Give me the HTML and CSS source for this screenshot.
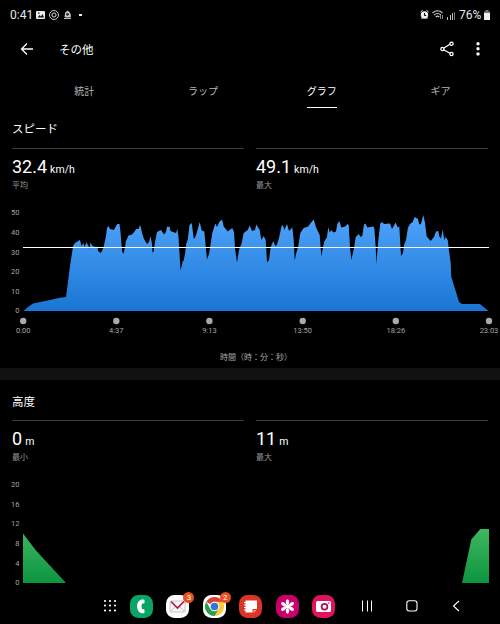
FILE: index.html
```html
<!DOCTYPE html>
<html lang="ja">
<head>
  <meta charset="UTF-8" />
  <meta name="viewport" content="width=device-width, initial-scale=1.0" />
  <title>その他</title>
  <link rel="stylesheet" href="styles.css">
</head>
<body>
  <div class="screen">
    <div class="status">
      <span class="clock">0:41</span>
      <svg class="status-left" width="50" height="12" viewBox="0 0 50 12">
        <rect x="0" y="2" width="9" height="8" rx="1" fill="#eee"/>
        <path d="M1.500 8.500l2-2.500 1.500 1.500L6.500 5l1.500 3.500z" fill="#111"/>
        <rect x="2" y="3.500" width="1.500" height="1.200" fill="#111"/>
        <circle cx="18" cy="6" r="4.500" fill="none" stroke="#ccc"/>
        <circle cx="18" cy="6" r="2.100" fill="none" stroke="#ddd"/>
        <path d="M28 9.500h7M29 8q0-5 2.500-6 3 1 3 6z" fill="#bbb" stroke="#bbb"/>
        <circle cx="31.500" cy="5.300" r="2" fill="#333" stroke="#fff" stroke-width=".8"/>
        <rect x="43" y="5" width="3" height="2" fill="#eee"/>
      </svg>
      <svg class="status-right" width="36" height="12" viewBox="0 0 36 12">
        <circle cx="4.500" cy="6" r="3.700" fill="#eee"/>
        <path d="M.5 3L2.500 1.300M8.500 3L6.500 1.300M1.500 10l1-1M7.500 10l-1-1" stroke="#eee"/>
        <path d="M4.500 4v2.500h1.700" fill="none" stroke="#000"/>
        <path d="M12.500 4q5-4.500 10 0M14 6q3.500-3 7 0M15.700 8q1.800-1.800 3.600 0" fill="none" stroke="#ccc" stroke-width="1.100"/>
        <path d="M20.500 6v4M22.500 6v4" stroke="#888"/>
        <path d="M27.500 8v3M30.500 6v5M32.500 4v7" stroke="#bbb"/>
        <path d="M34.500 3v8" stroke="#777"/>
      </svg>
      <span class="percent">76%</span>
      <svg class="battery" width="6" height="10" viewBox="0 0 6 10">
        <path d="M1.500 0h3v1.500H6V4H0V1.500h1.500z" fill="#777"/>
        <rect y="3" width="6" height="7" fill="#eee"/>
      </svg>
    </div>

    <header class="app-bar">
      <svg width="14" height="14" viewBox="0 0 14 14" fill="none" stroke="#fff" stroke-width="1.300">
        <path d="M13 7H2M7 1.500L1.500 7 7 12.500"/>
      </svg>
      <h1>その他</h1>
      <svg class="share" width="14" height="16" viewBox="0 0 14 16" fill="none" stroke="#fff" stroke-width="1.300">
        <path d="M3.500 7.300L10 3.300M3.500 8.700L10 12.200"/>
        <circle cx="2.400" cy="8" r="1.600"/>
        <circle cx="11.500" cy="2.700" r="1.600"/>
        <circle cx="11.500" cy="13" r="1.600"/>
      </svg>
      <svg class="more" width="4" height="16" viewBox="0 0 4 16" fill="#fff">
        <rect x=".5" y="1.200" width="3" height="3" rx=".7"/>
        <rect x=".5" y="6.300" width="3" height="3" rx=".7"/>
        <rect x=".5" y="11.500" width="3" height="3" rx=".7"/>
      </svg>
    </header>

    <nav class="tabs">
      <a>統計</a>
      <a>ラップ</a>
      <a class="active">グラフ</a>
      <a>ギア</a>
    </nav>

    <section class="speed">
      <h2>スピード</h2>
      <div class="stats">
        <div class="stat">
          <p class="value"><span>32.4</span><small>km/h</small></p>
          <p class="label">平均</p>
        </div>
        <div class="stat">
          <p class="value"><span>49.1</span><small>km/h</small></p>
          <p class="label">最大</p>
        </div>
      </div>
      <svg class="chart" width="500" height="140" viewBox="0 0 500 140">
        <defs>
          <linearGradient id="blue" gradientUnits="userSpaceOnUse" x1="0" y1="15" x2="0" y2="111">
            <stop offset="0" stop-color="#4fa3fb"/>
            <stop offset="1" stop-color="#1976d3"/>
          </linearGradient>
        </defs>
        <polygon fill="url(#blue)" points="23,111 24,110.500 28,107 33,103.500 50,100 60,97.800 66,97 68,82 70,66 72.500,50 73,46 75,43 79,40.500 80,40 81.500,46 83.500,43 84.500,47 86.500,42.500 88.500,46 89.500,49 90.500,42.500 92.500,46 96,47 97.500,46.500 98,51 100.500,53 102,51 103.500,47 104.500,43 106,36 107,28 108.500,26 110,29 114,30 116,26 117.500,24 119.500,24 120.500,32 122,51 123.500,54 125,47 126,41 128.500,35.500 132,34.500 135,31 136,29 138.500,29 140,25 141,28 142,33 144,39 147,44 149,42 150.500,36 152,44 152.500,52.500 153.500,52 155,42 157,32 161,30 164,34.500 166,32 167,26.500 169.700,27 170.500,31 173,32 176,33 177.300,29 178.500,37 180.500,70 182,65 182.500,61.500 183.500,61 185,54 186.300,43.500 187.700,40 189.500,25 191.700,23 193.700,38.500 195,38 197,32 199.700,22 201.700,30.500 204.300,31.500 205.300,42 207,59.500 209,54 210.300,46 212.300,33 215.300,23.500 217,27 219.300,22 222,19.500 223.700,26.500 227.700,31.500 232.300,28 234,32 235,48 237,62.700 239,50 241.700,43 243.700,33 247.700,30 249.700,25.500 252,31 255,30 256.300,24.500 259.700,30 261.300,40 263.700,36 265.700,40 267,62.500 269,60 270.700,47 273.300,41 275,45.500 276.700,45.500 279,38 281.700,25.500 283,25.500 284.300,30 287,24 289,31 292.300,27.500 293.700,40 294.700,60.500 296.300,53 298.300,46 300.300,33 303.700,28 308.300,26.500 310.300,23.500 313.700,19.500 316.300,28 319.700,35 321.300,56.500 323.300,46 324.300,41.500 327,37 328.300,27 329.700,32.500 331.300,30 333.300,32.500 336,31.500 337.300,24 339.300,21 341.300,27.500 345.300,26.500 347.300,24 348.700,25 350,47 351.300,60 354,48 355.700,37 358.700,34 360.700,37 362.300,36 364,24.500 365.500,23.500 367.300,27.500 373.300,26.500 374.300,28 375.700,47 376.400,64 378,43 380.300,23.500 382,22 384,24 390,23.500 392,29 395.700,22.500 397.700,27.500 399.300,26.500 401,56 403,53 404,45 406,40 408,27.500 410,24 412.700,22 414.700,17 418,19 419.300,24.500 421,24 423.300,15 425,23 426.700,36.500 430.700,41 434,37 436,31.500 438.300,31 439.300,36.500 441,38.500 442.700,29.500 444.300,40 445.700,37 447.700,40 449.300,53 450.700,63 451.300,77 456,92 459,102 462,104 480,104 488.500,111"/>
        <rect x="23" y="47" width="466" height="1" fill="#fff"/>
        <g class="y-axis">
          <text x="19.500" y="15">50</text>
          <text x="19.500" y="34.500">40</text>
          <text x="19.500" y="54.500">30</text>
          <text x="19.500" y="74">20</text>
          <text x="19.500" y="93.500">10</text>
          <text x="19.500" y="113">0</text>
        </g>
        <g fill="#aaa">
          <circle cx="23.200" cy="121" r="3.200"/>
          <circle cx="116.300" cy="121" r="3.200"/>
          <circle cx="209.400" cy="121" r="3.200"/>
          <circle cx="302.700" cy="121" r="3.200"/>
          <circle cx="395.800" cy="121" r="3.200"/>
          <circle cx="489" cy="121" r="3.200"/>
        </g>
        <g class="x-axis">
          <text x="23.200" y="133">0:00</text>
          <text x="116.300" y="133">4:37</text>
          <text x="209.400" y="133">9:13</text>
          <text x="302.700" y="133">13:50</text>
          <text x="395.800" y="133">18:26</text>
          <text x="489" y="133">23:03</text>
        </g>
      </svg>
      <p class="caption">時間（時：分：秒）</p>
    </section>

    <section class="altitude">
      <h2>高度</h2>
      <div class="stats">
        <div class="stat">
          <p class="value"><span>0</span><small>m</small></p>
          <p class="label">最小</p>
        </div>
        <div class="stat">
          <p class="value"><span>11</span><small>m</small></p>
          <p class="label">最大</p>
        </div>
      </div>
      <svg class="chart" width="500" height="115" viewBox="0 0 500 115">
        <defs>
          <linearGradient id="green" gradientUnits="userSpaceOnUse" x1="0" y1="57" x2="0" y2="111">
            <stop offset="0" stop-color="#3fb760"/>
            <stop offset="1" stop-color="#0c9540"/>
          </linearGradient>
        </defs>
        <polygon fill="url(#green)" points="23,61.500 36,78.500 66,111 23,111"/>
        <polygon fill="url(#green)" points="462,111 471.300,67.500 480.300,57 489,57 489,111"/>
        <g class="y-axis">
          <text x="19.500" y="15">20</text>
          <text x="19.500" y="34.500">16</text>
          <text x="19.500" y="54">12</text>
          <text x="19.500" y="74">8</text>
          <text x="19.500" y="93.500">4</text>
          <text x="19.500" y="113">0</text>
        </g>
      </svg>
    </section>

    <footer class="dock">
      <svg class="grid-icon" width="14" height="14" viewBox="0 0 14 14" fill="#fff">
        <circle cx="2" cy="2" r="1.100"/><circle cx="7" cy="2" r="1.100"/><circle cx="12" cy="2" r="1.100"/>
        <circle cx="2" cy="6.500" r="1.100"/><circle cx="7" cy="6.500" r="1.100"/><circle cx="12" cy="6.500" r="1.100"/>
        <circle cx="2" cy="11.500" r="1.100"/><circle cx="7" cy="11.500" r="1.100"/><circle cx="12" cy="11.500" r="1.100"/>
      </svg>

      <div class="app">
        <svg width="23" height="23" viewBox="0 0 23 23">
          <rect width="23" height="23" rx="8.500" fill="#09a566"/>
          <path d="M13.500 4.500Q14.500 4.500 14.500 5.500V7.500Q14.500 8.500 13.500 8.500H12Q10.800 11.500 12 14.300H13.500Q14.500 14.300 14.500 15.300V17.300Q14.500 18.300 13.500 18.300H11.500C5.500 16.500 5.500 6 11.500 4.500z" fill="#fff"/>
        </svg>
      </div>
      <div class="app">
        <svg width="23" height="23" viewBox="0 0 23 23">
          <rect width="23" height="23" rx="8.500" fill="#fff"/>
          <rect x="4" y="6" width="15" height="11" rx="1" fill="#f8f8f8" stroke="#c4c4c8"/>
          <path d="M4.500 16.500l5-5M18.500 16.500l-5-5" stroke="#c4c4c8"/>
          <path d="M5 6.500l6.500 6.500L18 6.500" fill="none" stroke="#b91645" stroke-width="1.700"/>
        </svg>
        <span class="badge">3</span>
      </div>
      <div class="app">
        <svg width="23" height="23" viewBox="0 0 23 23">
          <rect width="23" height="23" rx="8.500" fill="#fff"/>
          <path d="M11.500 11.500L3.270 6.750A9.500 9.500 0 0 1 19.730 6.750z" fill="#df3e32"/>
          <path d="M11.500 11.500V6.750H19.730A9.500 9.500 0 0 1 11.500 21z" fill="#fccb35"/>
          <path d="M11.500 21A9.500 9.500 0 0 1 3.270 6.750L7.400 13.900 15.600 13.900z" fill="#299c4e"/>
          <circle cx="11.500" cy="11.500" r="4.800" fill="#fff"/>
          <circle cx="11.500" cy="11.500" r="3.800" fill="#3474df"/>
        </svg>
        <span class="badge">2</span>
      </div>
      <div class="app">
        <svg width="23" height="23" viewBox="0 0 23 23">
          <rect width="23" height="23" rx="8.500" fill="#dc3428"/>
          <path d="M6.500 5.500H18v8.500h-4.500v3.500h-7z" fill="#fff"/>
          <path d="M14.500 15h3l-3 3z" fill="#f7aaa3"/>
          <path d="M5 7.500h2M5 10h2M5 12.500h2M5 15h2" stroke="#fff"/>
        </svg>
      </div>
      <div class="app">
        <svg width="23" height="23" viewBox="0 0 23 23">
          <rect width="23" height="23" rx="8.500" fill="#c9006b"/>
          <g fill="#fff">
            <ellipse cx="11.500" cy="7" rx="1.700" ry="2.800"/>
            <ellipse cx="11.500" cy="7" rx="1.700" ry="2.800" transform="rotate(60 11.500 11.500)"/>
            <ellipse cx="11.500" cy="7" rx="1.700" ry="2.800" transform="rotate(120 11.500 11.500)"/>
            <ellipse cx="11.500" cy="7" rx="1.700" ry="2.800" transform="rotate(180 11.500 11.500)"/>
            <ellipse cx="11.500" cy="7" rx="1.700" ry="2.800" transform="rotate(240 11.500 11.500)"/>
            <ellipse cx="11.500" cy="7" rx="1.700" ry="2.800" transform="rotate(300 11.500 11.500)"/>
            <circle cx="11.500" cy="11.500" r="2.200"/>
          </g>
        </svg>
      </div>
      <div class="app">
        <svg width="23" height="23" viewBox="0 0 23 23">
          <rect width="23" height="23" rx="8.500" fill="#e0135c"/>
          <path d="M5.500 6h12q1.500 0 1.500 1.500v8q0 1.500-1.500 1.500h-12Q4 17 4 15.500v-8Q4 6 5.500 6z" fill="#fff"/>
          <circle cx="12.500" cy="11.700" r="2.900" fill="#fff" stroke="#b20d4c" stroke-width="1.700"/>
          <circle cx="16.800" cy="8" r=".8" fill="#b20d4c"/>
        </svg>
      </div>

      <svg class="recent" width="12" height="12" viewBox="0 0 12 12" stroke="#fff">
        <path d="M1.500 .5v11M6.500 .5v11M10.500 .5v11"/>
      </svg>
      <svg class="home" width="12" height="12" viewBox="0 0 12 12" fill="none" stroke="#fff" stroke-width="1.100">
        <rect x=".8" y=".8" width="10.200" height="10.200" rx="2.500"/>
      </svg>
      <svg class="back" width="8" height="12" viewBox="0 0 8 12" fill="none" stroke="#fff" stroke-width="1.100">
        <path d="M7 1L1.500 6 7 11"/>
      </svg>
    </footer>
  </div>
</body>
</html>
```
FILE: styles.css
```css
* {
  box-sizing: border-box;
}
body {
  margin: 0;
  background: #000;
  color: #fff;
  font-family: Roboto, "Noto Sans CJK JP", sans-serif;
}
h1, h2, p {
  margin: 0;
  font-weight: 400;
}
svg {
  display: block;
  flex: none;
}
.screen {
  width: 500px;
  height: 624px;
  overflow: hidden;
  display: flex;
  flex-direction: column;
}
.status {
  display: flex;
  align-items: center;
  height: 30px;
  padding: 0 10px 0 10px;
  font-size: 12px;
  color: #e6e6e6;
}
.clock {
  width: 26px;
}
.status-right {
  margin-left: auto;
  margin-right: 3px;
}
.percent {
  width: 25px;
}
.app-bar {
  display: flex;
  align-items: center;
  height: 38px;
  padding: 0 20px;
}
.app-bar h1 {
  margin-left: 25px;
  font-size: 11.5px;
}
.share {
  margin-left: auto;
}
.more {
  margin-left: 22px;
}
.tabs {
  display: grid;
  grid-template-columns: repeat(4, 118.7px);
  justify-items: center;
  height: 40px;
  padding-left: 25px;
}
.tabs a {
  height: 40px;
  font-size: 10px;
  line-height: 47px;
  color: #b5b5b5;
}
.tabs .active {
  color: #fff;
  border-bottom: 1px solid #fff;
}
.speed {
  height: 260px;
}
.altitude {
  height: 215px;
  border-top: 12px solid #111;
}
h2 {
  height: 40px;
  padding-left: 12px;
  font-size: 11.5px;
  line-height: 43px;
}
.stats {
  display: grid;
  grid-template-columns: 1fr 1fr;
  gap: 12px;
  height: 52px;
  padding: 0 12px;
}
.stat {
  border-top: 1px solid #3c3c3c;
}
.value {
  display: flex;
  align-items: baseline;
  gap: 3px;
  height: 30px;
  font-size: 18px;
  line-height: 36px;
}
.value small {
  font-size: 10.5px;
}
.label {
  font-size: 8px;
  line-height: 13px;
  color: #999;
}
.chart text {
  font-size: 7.5px;
  fill: #a5a5a5;
}
.y-axis {
  text-anchor: end;
}
.x-axis {
  text-anchor: middle;
}
.caption {
  padding-left: 12px;
  text-align: center;
  font-size: 8px;
  line-height: 36px;
  color: #aaa;
}
.altitude h2 {
  line-height: 45px;
}
.dock {
  display: flex;
  align-items: center;
  height: 41px;
  padding: 5px 40px 0 103px;
}
.app {
  position: relative;
  margin-left: 13.4px;
}
.grid-icon + .app {
  margin-left: 13px;
}
.badge {
  position: absolute;
  top: -3px;
  right: -5px;
  width: 11px;
  height: 11px;
  border-radius: 50%;
  background: #e8501e;
  font-size: 8px;
  line-height: 11px;
  text-align: center;
}
.recent {
  margin-left: 26px;
}
.home {
  margin-left: 33px;
}
.back {
  margin-left: 34px;
}
```
